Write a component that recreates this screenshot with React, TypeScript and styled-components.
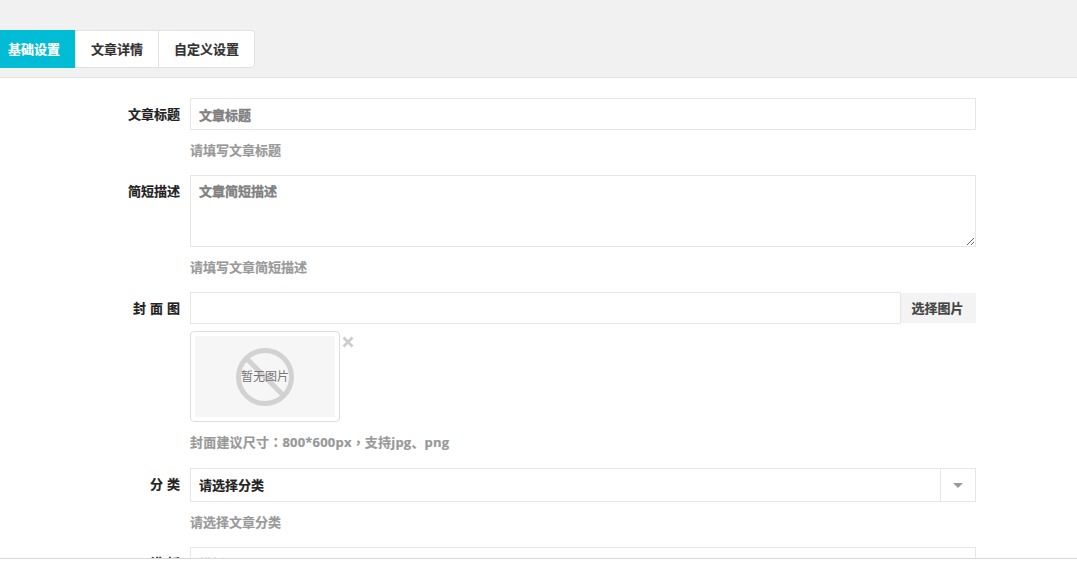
import React from "react";
import styled, { createGlobalStyle } from "styled-components";

const GlobalStyle = createGlobalStyle`
  html, body {
    margin: 0;
    padding: 0;
    height: 100%;
    background: #fff;
    overflow: hidden;
  }
  body {
    font-family: "Open Sans", "Noto Sans CJK SC", sans-serif;
    font-size: 13px;
    font-weight: 700;
    color: #333;
    -webkit-text-stroke: 0.2px currentColor;
  }
`;

const tabs = ["基础设置", "文章详情", "自定义设置"];

const App: React.FC = () => {
  return (
    <Page>
      <GlobalStyle />
      <Header>
        <TabBar>
          {tabs.map((tab, i) => (
            <Tab key={tab} $active={i === 0}>
              {tab}
            </Tab>
          ))}
        </TabBar>
      </Header>
      <Form>
        <Row>
          <Label>文章标题</Label>
          <Field>
            <TextInput placeholder="文章标题" />
            <Help>请填写文章标题</Help>
          </Field>
        </Row>
        <Row>
          <Label>简短描述</Label>
          <Field>
            <TextArea placeholder="文章简短描述" />
            <Help>请填写文章简短描述</Help>
          </Field>
        </Row>
        <Row>
          <Label>封 面 图</Label>
          <Field>
            <InputGroup>
              <TextInput />
              <AddonButton>选择图片</AddonButton>
            </InputGroup>
            <PreviewRow>
              <Thumbnail>
                <NoImage>
                  <NoImageIcon viewBox="0 0 58 58">
                    <circle cx="29" cy="29" r="26.5" fill="none" stroke="#d2d2d2" strokeWidth="5" />
                    <line x1="10.5" y1="10.5" x2="47.5" y2="47.5" stroke="#d2d2d2" strokeWidth="5" />
                  </NoImageIcon>
                  <NoImageText>暂无图片</NoImageText>
                </NoImage>
              </Thumbnail>
              <RemoveIcon viewBox="0 0 12 12">
                <path d="M1.5 1.5 L10.5 10.5 M10.5 1.5 L1.5 10.5" stroke="#ccc" strokeWidth="2.6" fill="none" />
              </RemoveIcon>
            </PreviewRow>
            <CoverHelp>
              封面建议尺寸<Punct>：</Punct>800*600px<Punct>，</Punct>支持jpg、png
            </CoverHelp>
          </Field>
        </Row>
        <Row>
          <Label>分 类</Label>
          <Field>
            <Select>
              <SelectValue>请选择分类</SelectValue>
              <SelectArrow>
                <Caret />
              </SelectArrow>
            </Select>
            <Help>请选择文章分类</Help>
          </Field>
        </Row>
        <Row>
          <Label>模 板</Label>
          <Field>
            <TextInput placeholder="模板" />
          </Field>
        </Row>
      </Form>
    </Page>
  );
};

export default App;

const Page = styled.div`
  height: 559px;
  overflow: hidden;
  display: flex;
  flex-direction: column;
  border-bottom: 1px solid #d5d9dc;
  box-sizing: border-box;
`;

const Header = styled.header`
  flex: none;
  height: 77px;
  box-sizing: border-box;
  padding-top: 30px;
  background: #f1f1f1;
  box-shadow: 0 1px 1px rgba(0, 0, 0, 0.1);
`;

const TabBar = styled.nav`
  display: flex;
  width: max-content;
  height: 38px;
  box-sizing: border-box;
  background: #fff;
  border-radius: 0 4px 4px 0;
  border: 1px solid #e2e2e2;
  border-left: none;
`;

const Tab = styled.div<{ $active?: boolean }>`
  display: flex;
  align-items: center;
  padding: 0 15px 2px;
  margin: ${(p) => (p.$active ? "-1px 0" : "0")};
  color: ${(p) => (p.$active ? "#fff" : "#333")};
  background: ${(p) => (p.$active ? "#00bcd4" : "transparent")};
  padding-left: ${(p) => (p.$active ? "8px" : "15px")};

  & + & {
    border-left: 1px solid #e2e2e2;
  }
`;

const Form = styled.main`
  flex: 1;
  padding-top: 21px;
`;

const Row = styled.div`
  display: flex;
  width: 976px;
  margin-bottom: 15px;
`;

const Label = styled.label`
  flex: none;
  width: 180px;
  padding-right: 10px;
  line-height: 32px;
  text-align: right;
  word-spacing: 0.6px;
  color: #222;
`;

const Field = styled.div`
  flex: 1;
  min-width: 0;
`;

const TextInput = styled.input`
  display: block;
  width: 100%;
  height: 32px;
  box-sizing: border-box;
  padding: 1px 8px 0;
  font: inherit;
  color: #333;
  background: #fff;
  border: 1px solid #e6e6e6;
  outline: none;

  &::placeholder {
    color: #808080;
    opacity: 1;
    -webkit-text-stroke: 0.35px #808080;
  }
`;

const TextArea = styled.textarea`
  display: block;
  width: 100%;
  height: 72px;
  box-sizing: border-box;
  padding: 7px 8px;
  font: inherit;
  line-height: 16px;
  color: #333;
  background: #fff;
  border: 1px solid #e6e6e6;
  outline: none;

  &::placeholder {
    color: #808080;
    opacity: 1;
    -webkit-text-stroke: 0.35px #808080;
  }
`;

const Help = styled.p`
  margin: 11px 0 1px;
  line-height: 18px;
  color: #999;
`;

const CoverHelp = styled(Help)`
  margin: 11px 0 2px;
  letter-spacing: 0.2px;
`;

const Punct = styled.span`
  font-family: "Noto Sans CJK TC", sans-serif;
`;

const InputGroup = styled.div`
  display: flex;
`;

const AddonButton = styled.div`
  flex: none;
  display: flex;
  align-items: center;
  justify-content: center;
  width: 75px;
  height: 30px;
  margin-top: 1px;
  padding: 0 2px 2px 0;
  box-sizing: border-box;
  background: #f3f3f3;
  color: #444;
`;

const PreviewRow = styled.div`
  display: flex;
  align-items: flex-start;
  margin-top: 7px;
`;

const Thumbnail = styled.div`
  width: 150px;
  height: 91px;
  box-sizing: border-box;
  padding: 4px;
  background: #fff;
  border: 1px solid #ddd;
  border-radius: 4px;
`;

const NoImage = styled.div`
  position: relative;
  display: flex;
  height: 81px;
  align-items: center;
  justify-content: center;
  background: #f6f6f6;
`;

const NoImageIcon = styled.svg`
  width: 58px;
  height: 58px;
`;

const NoImageText = styled.span`
  position: absolute;
  top: 0;
  left: 0;
  right: 0;
  line-height: 81px;
  text-align: center;
  font-size: 12px;
  font-weight: 400;
  color: #777;
  -webkit-text-stroke: 0;
`;

const RemoveIcon = styled.svg`
  width: 12px;
  height: 12px;
  margin: 5px 0 0 2px;
`;

const Select = styled.div`
  display: flex;
  height: 34px;
  box-sizing: border-box;
  background: #fff;
  border: 1px solid #e6e6e6;
`;

const SelectValue = styled.div`
  flex: 1;
  padding: 0 8px;
  line-height: 32px;
  color: #222;
`;

const SelectArrow = styled.div`
  flex: none;
  display: flex;
  align-items: center;
  justify-content: center;
  width: 34px;
  border-left: 1px solid #e6e6e6;
`;

const Caret = styled.span`
  width: 0;
  height: 0;
  border-left: 5px solid transparent;
  border-right: 5px solid transparent;
  border-top: 5px solid #999;
`;
